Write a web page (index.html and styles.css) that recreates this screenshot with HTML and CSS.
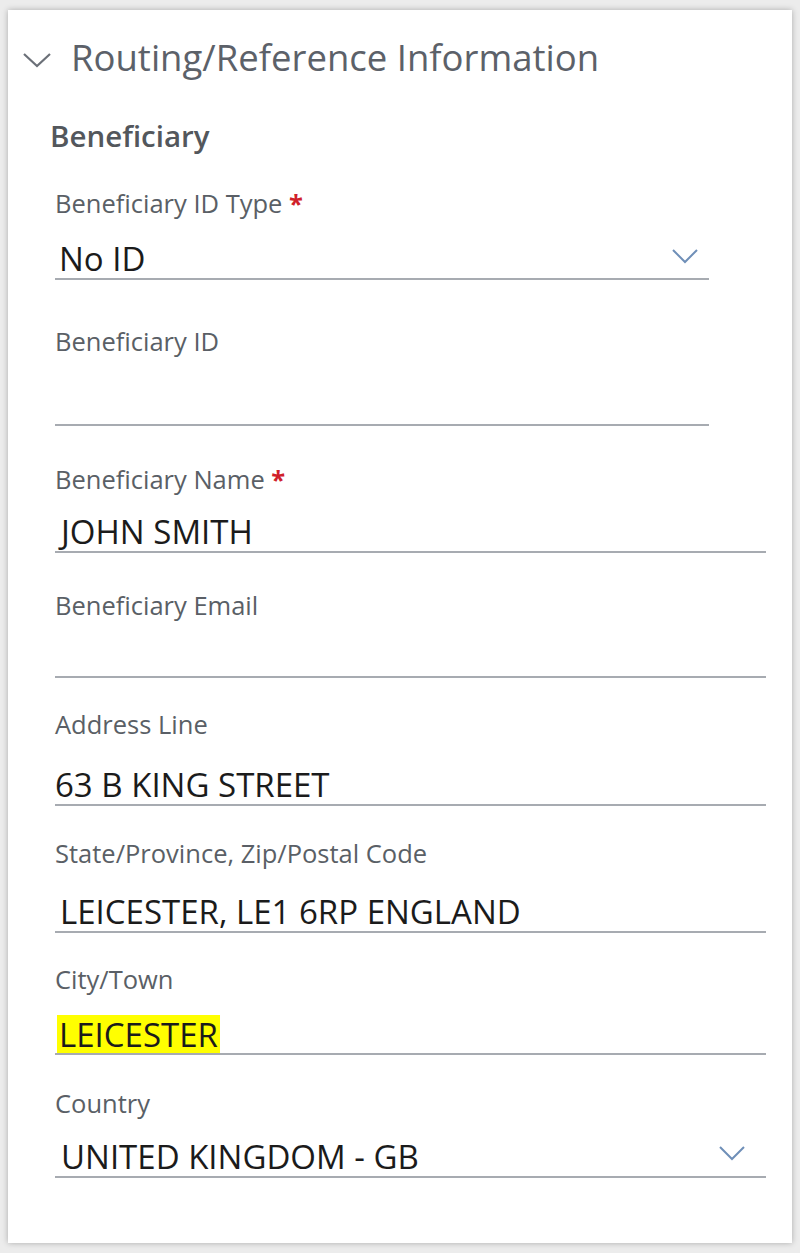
FILE: index.html
```html
<!DOCTYPE html>
<html lang="en">
<head>
<meta charset="utf-8">
<title>Routing/Reference Information</title>
<link rel="stylesheet" href="styles.css">
</head>
<body>
<section class="card">
  <header class="card-header">
    <svg class="chev-head" width="30" height="18" viewBox="0 0 30 18"><path d="M2 3 L15 15 L28 3" fill="none" stroke="#6b7078" stroke-width="2.2"/></svg>
    <h1 class="title">Routing/Reference Information</h1>
  </header>
  <h2 class="subhead">Beneficiary</h2>

  <div class="field narrow f1">
    <div class="label">Beneficiary ID Type <span class="req">*</span></div>
    <div class="value h60"><span class="pad4">No ID</span>
      <svg class="chev" width="28" height="16" viewBox="0 0 28 16"><path d="M2 2 L14 14 L26 2" fill="none" stroke="#6f8fb8" stroke-width="2"/></svg>
    </div>
  </div>

  <div class="field narrow f2">
    <div class="label">Beneficiary ID</div>
    <div class="value h68"></div>
  </div>

  <div class="field f3">
    <div class="label">Beneficiary Name <span class="req">*</span></div>
    <div class="value h57"><span class="pad6">JOHN SMITH</span></div>
  </div>

  <div class="field f4">
    <div class="label">Beneficiary Email</div>
    <div class="value h56"></div>
  </div>

  <div class="field f5">
    <div class="label">Address Line</div>
    <div class="value h65"><span>63 B KING STREET</span></div>
  </div>

  <div class="field f6">
    <div class="label">State/Province, Zip/Postal Code</div>
    <div class="value h63"><span class="pad5">LEICESTER, LE1 6RP ENGLAND</span></div>
  </div>

  <div class="field f7">
    <div class="label">City/Town</div>
    <div class="value h59"><span class="hl">LEICESTER</span></div>
  </div>

  <div class="field f8">
    <div class="label">Country</div>
    <div class="value h58"><span class="pad6">UNITED KINGDOM - GB</span>
      <svg class="chev" width="28" height="16" viewBox="0 0 28 16"><path d="M2 2 L14 14 L26 2" fill="none" stroke="#6f8fb8" stroke-width="2"/></svg>
    </div>
  </div>
</section>
</body>
</html>
```
FILE: styles.css
```css
html, body {
  margin: 0;
  padding: 0;
}
body {
  background: #ececec;
  padding: 10px 8px 10px 8px;
  font-family: "Open Sans", "Noto Sans", "Liberation Sans", sans-serif;
}
.card {
  background: #ffffff;
  height: 1233px;
  box-sizing: border-box;
  box-shadow: 0 0 6px rgba(0,0,0,0.28);
  padding: 0 26px 0 47px;
}
.card-header {
  display: flex;
  align-items: center;
  height: 94px;
  margin-left: -33px;
}
.chev-head {
  margin-right: 19px;
  margin-top: 6px;
}
.title {
  margin: 0;
  font-weight: 400;
  font-size: 36.5px;
  color: #5c6169;
  line-height: 1;
}
.subhead {
  margin: 17px 0 0 -5px;
  font-size: 29.5px;
  font-weight: 600;
  color: #53575c;
  line-height: 30px;
  letter-spacing: 0;
}
.field {
  display: flex;
  flex-direction: column;
}
.field.narrow {
  margin-right: 57px;
}
.f1 { margin-top: 37px; }
.f2 { margin-top: 46px; }
.f3 { margin-top: 38px; }
.f4 { margin-top: 37px; }
.f5 { margin-top: 31px; }
.f6 { margin-top: 32px; }
.f7 { margin-top: 31px; }
.f8 { margin-top: 33px; }
.label {
  font-size: 25.5px;
  line-height: 30px;
  color: #5a5f66;
  letter-spacing: 0;
}
.req {
  color: #d0202a;
  font-weight: 700;
}
.value {
  display: flex;
  align-items: flex-end;
  justify-content: space-between;
  border-bottom: 2px solid #a7abb1;
  font-size: 33px;
  line-height: 38px;
  color: #1b1b1b;
  letter-spacing: 0;
}
.h56 { height: 56px; }
.h57 { height: 57px; }
.h58 { height: 58px; }
.h59 { height: 59px; }
.h60 { height: 60px; }
.h63 { height: 63px; }
.h65 { height: 65px; }
.h68 { height: 68px; }
.pad4 { padding-left: 4px; }
.pad5 { padding-left: 5px; }
.pad6 { padding-left: 6px; }
.hl {
  display: inline-block;
  background: #ffff00;
  height: 38px;
  line-height: 40px;
  padding: 0 2px 0 2px;
  margin-left: 2px;
}
.chev {
  align-self: flex-start;
  margin-top: 30px;
  margin-right: 10px;
}
.f8 .chev { margin-right: 20px; margin-top: 27px; }
```
